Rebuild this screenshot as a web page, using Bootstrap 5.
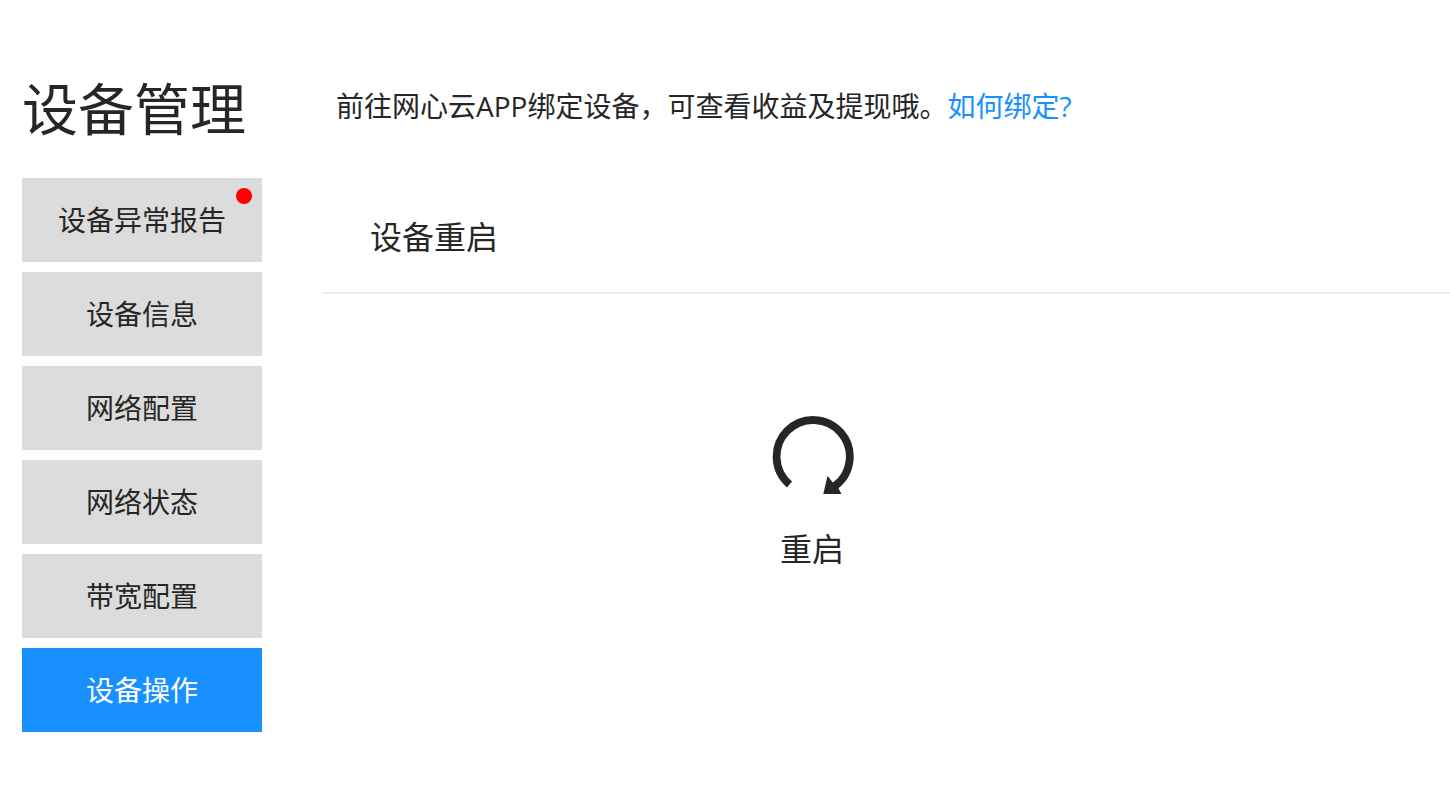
<!DOCTYPE html>
<html lang="zh-CN">
<head>
<meta charset="utf-8">
<meta name="viewport" content="width=device-width, initial-scale=1">
<title>设备管理</title>
<link href="https://cdn.jsdelivr.net/npm/bootstrap@5.3.0/dist/css/bootstrap.min.css" rel="stylesheet">
<style>
  body { font-family: "Open Sans", "Noto Sans CJK SC", sans-serif; color: #262626; font-size: 28px; line-height: 40px; }
  .shell { gap: 60px; padding: 68px 0 68px 22px; }
  .side { width: 240px; }
  .page-title { font-size: 56px; line-height: 80px; margin-bottom: 30px; white-space: nowrap; font-weight: 400; }
  .side-menu { gap: 10px; }
  .side-menu .nav-link { background: #dcdcdc; color: #262626; border-radius: 0; padding: 22px 0; text-align: center; }
  .side-menu .nav-link.active { background: #1890ff; color: #fff; }
  .dot { width: 16px; height: 16px; background: #f00; top: 10px; right: 10px; }
  .hint { padding: 18px 14px 0; margin-bottom: 56px; }
  .hint a { color: #1890ff; }
  .section-title { font-size: 32px; line-height: 48px; padding: 31px 48px; border-bottom: 2px solid #eee; font-weight: 400; }
  .actions { max-width: 980px; padding-top: 121px; }
  .restart { color: #262626; font-size: 32px; line-height: 48px; gap: 28px; }
</style>
</head>
<body class="bg-white">
<div class="shell d-flex">
  <aside class="side flex-shrink-0">
    <h1 class="page-title">设备管理</h1>
    <nav class="side-menu nav nav-pills flex-column">
      <a class="nav-link position-relative" href="#report">设备异常报告<span class="dot position-absolute rounded-circle"></span></a>
      <a class="nav-link" href="#info">设备信息</a>
      <a class="nav-link" href="#network">网络配置</a>
      <a class="nav-link" href="#status">网络状态</a>
      <a class="nav-link" href="#bandwidth">带宽配置</a>
      <a class="nav-link active" href="#operate" aria-current="page">设备操作</a>
    </nav>
  </aside>
  <main class="flex-grow-1">
    <p class="hint">前往网心云APP绑定设备，可查看收益及提现哦。<a class="text-decoration-none" href="#bind">如何绑定?</a></p>
    <h2 class="section-title mb-0">设备重启</h2>
    <div class="actions d-flex justify-content-center">
      <button type="button" class="restart btn border-0 p-0 d-flex flex-column align-items-center">
        <svg width="84" height="82" viewBox="-2 -0.5 84 82" aria-hidden="true">
          <path d="M17.5 69A36.6 36.6 0 1 1 63 70.5" fill="none" stroke="#262626" stroke-width="7.8"/>
          <path d="M55.5 60.5L60.5 66.5L66 72L69.5 78.5H51.3Z" fill="#262626"/>
        </svg>
        <span>重启</span>
      </button>
    </div>
  </main>
</div>
<script src="https://cdn.jsdelivr.net/npm/bootstrap@5.3.0/dist/js/bootstrap.bundle.min.js"></script>
</body>
</html>
